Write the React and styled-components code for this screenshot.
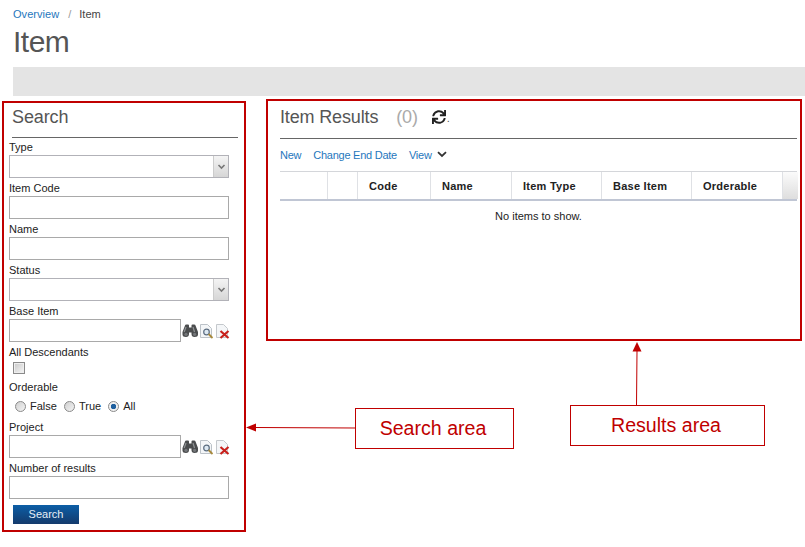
import React from "react";
import styled, { createGlobalStyle } from "styled-components";
import { FaSync } from "react-icons/fa";

const RED = "#c00000";

const GlobalStyle = createGlobalStyle`
  html, body {
    margin: 0;
    padding: 0;
    background: #fff;
    font-family: "Liberation Sans", Arial, sans-serif;
    overflow: hidden;
  }
`;

const Page = styled.div`
  position: relative;
  width: 805px;
  height: 547px;
  overflow: hidden;
`;

const Header = styled.header`
  padding: 7px 0 0 13px;
`;

const Breadcrumb = styled.div`
  display: flex;
  align-items: center;
  height: 13px;
  font-size: 11px;
  color: #444;
  a { color: #1f77bd; text-decoration: none; letter-spacing: 0.05px; }
  i { font-style: normal; color: #999; margin: 0 8px 0 9px; }
`;

const Title = styled.h1`
  margin: 0;
  padding-top: 2px;
  height: 45px;
  line-height: 40px;
  font-size: 30px;
  font-weight: normal;
  color: #555;
  letter-spacing: -0.5px;
`;

const GreyBar = styled.div`
  height: 29px;
  background: #e4e4e4;
`;

const Columns = styled.div`
  display: flex;
  align-items: flex-start;
  padding: 3px 3px 0 2px;
  gap: 20px;
`;

const SearchPanel = styled.section`
  box-sizing: border-box;
  width: 244px;
  height: 431px;
  margin-top: 2px;
  padding: 0 5px;
  border: 2px solid ${RED};
`;

const PanelTitle = styled.h2`
  margin: 0;
  font-size: 18px;
  font-weight: normal;
  color: #555;
  display: flex;
  align-items: center;
`;

const SearchTitle = styled(PanelTitle)`
  box-sizing: border-box;
  width: 226px;
  height: 35px;
  margin: 0 0 2px 3px;
  padding: 0 0 6px;
  letter-spacing: -0.1px;
  border-bottom: 1px solid #666;
`;

const Field = styled.div`
  margin-bottom: ${(p) => p.$mb ?? 3}px;
`;

const Label = styled.label`
  display: block;
  height: 15px;
  line-height: 15px;
  font-size: 11px;
  color: #222;
`;

const TextBox = styled.div`
  box-sizing: border-box;
  width: ${(p) => p.$width || 220}px;
  height: 23px;
  border: 1px solid #a9a9a9;
  background: #fff;
`;

const SelectBox = styled(TextBox)`
  display: flex;
  justify-content: flex-end;
  border-color: #b2b2b8;
`;

const SelectArrow = styled.div`
  width: 14px;
  display: flex;
  align-items: center;
  justify-content: center;
  border-left: 1px solid #ccc;
  background: linear-gradient(#f4f4f4, #d6d6d6);
`;

const LookupRow = styled.div`
  display: flex;
  align-items: center;
`;

const LookupIcons = styled.div`
  display: flex;
  align-items: center;
  margin-left: 1px;
  svg { display: block; }
`;

const CheckBox = styled.div`
  box-sizing: border-box;
  width: 12px;
  height: 12px;
  margin: 2px 0 6px 4px;
  border: 1px solid #8a8a8a;
  background: linear-gradient(135deg, #c8c8c8, #f6f6f6);
  box-shadow: inset 0 0 0 1px #eee;
`;

const RadioRow = styled.div`
  display: flex;
  align-items: center;
  height: 18px;
  margin: 2px 0 5px 6px;
  font-size: 11px;
  color: #222;
`;

const RadioItem = styled.span`
  display: flex;
  align-items: center;
  gap: 4px;
  margin-right: 7px;
`;

const RadioDot = styled.span`
  box-sizing: border-box;
  width: 11px;
  height: 11px;
  border-radius: 50%;
  border: 1px solid #8a8a8a;
  background: ${(p) => (p.$on
    ? "radial-gradient(circle, #1f5f9e 0 2.5px, #f0f0f0 3px)"
    : "linear-gradient(135deg, #cfcfcf, #f4f4f4)")};
`;

const SearchButton = styled.button`
  display: block;
  width: 66px;
  height: 19px;
  margin: 6px 0 0 4px;
  padding: 0 0 1px;
  border: none;
  background: linear-gradient(#0c5ea6, #143a6c);
  color: #e6eef6;
  font: 11px "Liberation Sans", Arial, sans-serif;
`;

const ResultsPanel = styled.section`
  box-sizing: border-box;
  width: 536px;
  height: 242px;
  padding: 0 3px 0 12px;
  border: 2px solid ${RED};
`;

const ResultsTitle = styled(PanelTitle)`
  box-sizing: border-box;
  height: 38px;
  border-bottom: 1px solid #666;
  padding-bottom: 5px;
  letter-spacing: -0.15px;
  em { font-style: normal; color: #aaa; margin-left: 18px; }
  svg { margin-left: 14px; color: #222; }
  small { font-size: 11px; color: #555; align-self: flex-end; margin-bottom: 9px; margin-left: 1px; }
`;

const Actions = styled.div`
  display: flex;
  align-items: center;
  gap: 12px;
  height: 32px;
  padding-bottom: 1px;
  box-sizing: border-box;
  font-size: 11px;
  letter-spacing: -0.25px;
  color: #1f77bd;
  svg { margin-left: 5px; display: block; }
`;

const ViewLink = styled.span`
  display: flex;
  align-items: center;
`;

const TableHead = styled.div`
  display: grid;
  grid-template-columns: 48px 30px 73px 81px 90px 90px 91px 15px;
  height: 30px;
  box-sizing: border-box;
  border-top: 1px solid #d4d6da;
  border-bottom: 2px solid #c0c6d4;
`;

const HeadCell = styled.div`
  display: flex;
  align-items: center;
  padding-left: 11px;
  font-size: 11px;
  font-weight: bold;
  letter-spacing: 0.25px;
  color: #222;
  border-right: 1px solid #dfe1e5;
`;

const HeadFiller = styled.div`
  background: linear-gradient(#fbfbfb, #dedede);
`;

const EmptyRow = styled.div`
  padding-top: 9px;
  text-align: center;
  font-size: 11px;
  color: #222;
`;

// callouts drawn over the page
const Callout = styled.div`
  position: absolute;
  left: ${(p) => p.$x}px;
  top: ${(p) => p.$y}px;
  width: ${(p) => p.$w}px;
  height: 41px;
  padding-right: 3px;
  box-sizing: border-box;
  display: flex;
  align-items: center;
  justify-content: center;
  border: 1px solid ${RED};
  background: #fff;
  color: ${RED};
  font-size: 19.6px;
`;

const Arrows = styled.svg`
  position: absolute;
  left: 0;
  top: 0;
`;

const DownArrow = () => (
  <svg width="9" height="6" viewBox="0 0 9 6">
    <path d="M1.5 1 L4.5 4 L7.5 1" fill="none" stroke="#777" strokeWidth="1.6" />
  </svg>
);

const Binoculars = () => (
  <svg width="17" height="14" viewBox="0 0 17 14">
    <path
      d="M3 1.5 Q3 .5 4.5 .5 H6 Q7 .5 7 1.5 V3.5 H9.5 V1.5 Q9.5 .5 10.5 .5 H12 Q13.5 .5 13.5 1.5 L16 8 V10.5 Q16 13 12.5 13 Q9.5 13 9.5 10 V8.5 H7 V10 Q7 13 4 13 Q.5 13 .5 10.5 V8 Z"
      fill="#4b4d4e"
    />
    <path d="M4 3 L2.2 8" stroke="#8f9294" strokeWidth="1.2" fill="none" />
    <path d="M11 3 L12.5 8" stroke="#8f9294" strokeWidth="1.2" fill="none" />
    <circle cx="4" cy="10.3" r="1.6" fill="#74777a" />
    <circle cx="12.6" cy="10.3" r="1.6" fill="#74777a" />
  </svg>
);

const DocSearch = () => (
  <svg width="16" height="16" viewBox="0 0 16 16">
    <path d="M1.5 1.5 H8.5 L12.5 5.5 V14.5 H1.5 Z" fill="#f4f6f8" stroke="#bcc2c8" />
    <circle cx="7.5" cy="9" r="2.8" fill="#dce8f2" stroke="#5c6d80" strokeWidth="1.2" />
    <path d="M9.6 11 L13.5 15" stroke="#a88a3c" strokeWidth="1.8" />
  </svg>
);

const DocDelete = () => (
  <svg width="16" height="16" viewBox="0 0 16 16">
    <path d="M1.5 1.5 H8.5 L12.5 5.5 V14.5 H1.5 Z" fill="#f4f6f8" stroke="#c4c8cc" />
    <path d="M5.5 8 L13.5 15 M13.5 8 L5.5 15" stroke="#c8201c" strokeWidth="2.2" />
  </svg>
);

const Lookup = () => (
  <LookupRow>
    <TextBox $width={172} />
    <LookupIcons>
      <Binoculars />
      <DocSearch />
      <DocDelete />
    </LookupIcons>
  </LookupRow>
);

const columns = ["", "", "Code", "Name", "Item Type", "Base Item", "Orderable"];

export default function App() {
  return (
    <Page>
      <GlobalStyle />
      <Header>
        <Breadcrumb>
          <a href="#overview">Overview</a>
          <i>/</i>
          <span>Item</span>
        </Breadcrumb>
        <Title>Item</Title>
        <GreyBar />
      </Header>
      <Columns>
        <SearchPanel>
          <SearchTitle>Search</SearchTitle>
          <Field>
            <Label>Type</Label>
            <SelectBox><SelectArrow><DownArrow /></SelectArrow></SelectBox>
          </Field>
          <Field>
            <Label>Item Code</Label>
            <TextBox />
          </Field>
          <Field>
            <Label>Name</Label>
            <TextBox />
          </Field>
          <Field>
            <Label>Status</Label>
            <SelectBox><SelectArrow><DownArrow /></SelectArrow></SelectBox>
          </Field>
          <Field>
            <Label>Base Item</Label>
            <Lookup />
          </Field>
          <Field $mb={0}>
            <Label>All Descendants</Label>
            <CheckBox />
          </Field>
          <Label>Orderable</Label>
          <RadioRow>
            <RadioItem><RadioDot />False</RadioItem>
            <RadioItem><RadioDot />True</RadioItem>
            <RadioItem><RadioDot $on />All</RadioItem>
          </RadioRow>
          <Field>
            <Label>Project</Label>
            <Lookup />
          </Field>
          <Field>
            <Label>Number of results</Label>
            <TextBox />
          </Field>
          <SearchButton>Search</SearchButton>
        </SearchPanel>
        <ResultsPanel>
          <ResultsTitle>
            Item Results
            <em>(0)</em>
            <FaSync size={14} />
            <small>.</small>
          </ResultsTitle>
          <Actions>
            <span>New</span>
            <span>Change End Date</span>
            <ViewLink>
              View
              <svg width="10" height="7" viewBox="0 0 10 7">
                <path d="M1 1.2 L5 5 L9 1.2" fill="none" stroke="#333" strokeWidth="1.8" />
              </svg>
            </ViewLink>
          </Actions>
          <TableHead>
            {columns.map((c, i) => (
              <HeadCell key={i}>{c}</HeadCell>
            ))}
            <HeadFiller />
          </TableHead>
          <EmptyRow>No items to show.</EmptyRow>
        </ResultsPanel>
      </Columns>
      <Callout $x={355} $y={408} $w={159}>Search area</Callout>
      <Callout $x={570} $y={405} $w={195}>Results area</Callout>
      <Arrows width="805" height="547">
        <path d="M355 428 L256 427.5" fill="none" stroke={RED} strokeWidth="1" />
        <path d="M246 427.5 L256 423.5 V431.5 Z" fill={RED} />
        <path d="M636.5 405 L637 351" fill="none" stroke={RED} strokeWidth="1" />
        <path d="M637 342 L632.5 351.5 H641.5 Z" fill={RED} />
      </Arrows>
    </Page>
  );
}
